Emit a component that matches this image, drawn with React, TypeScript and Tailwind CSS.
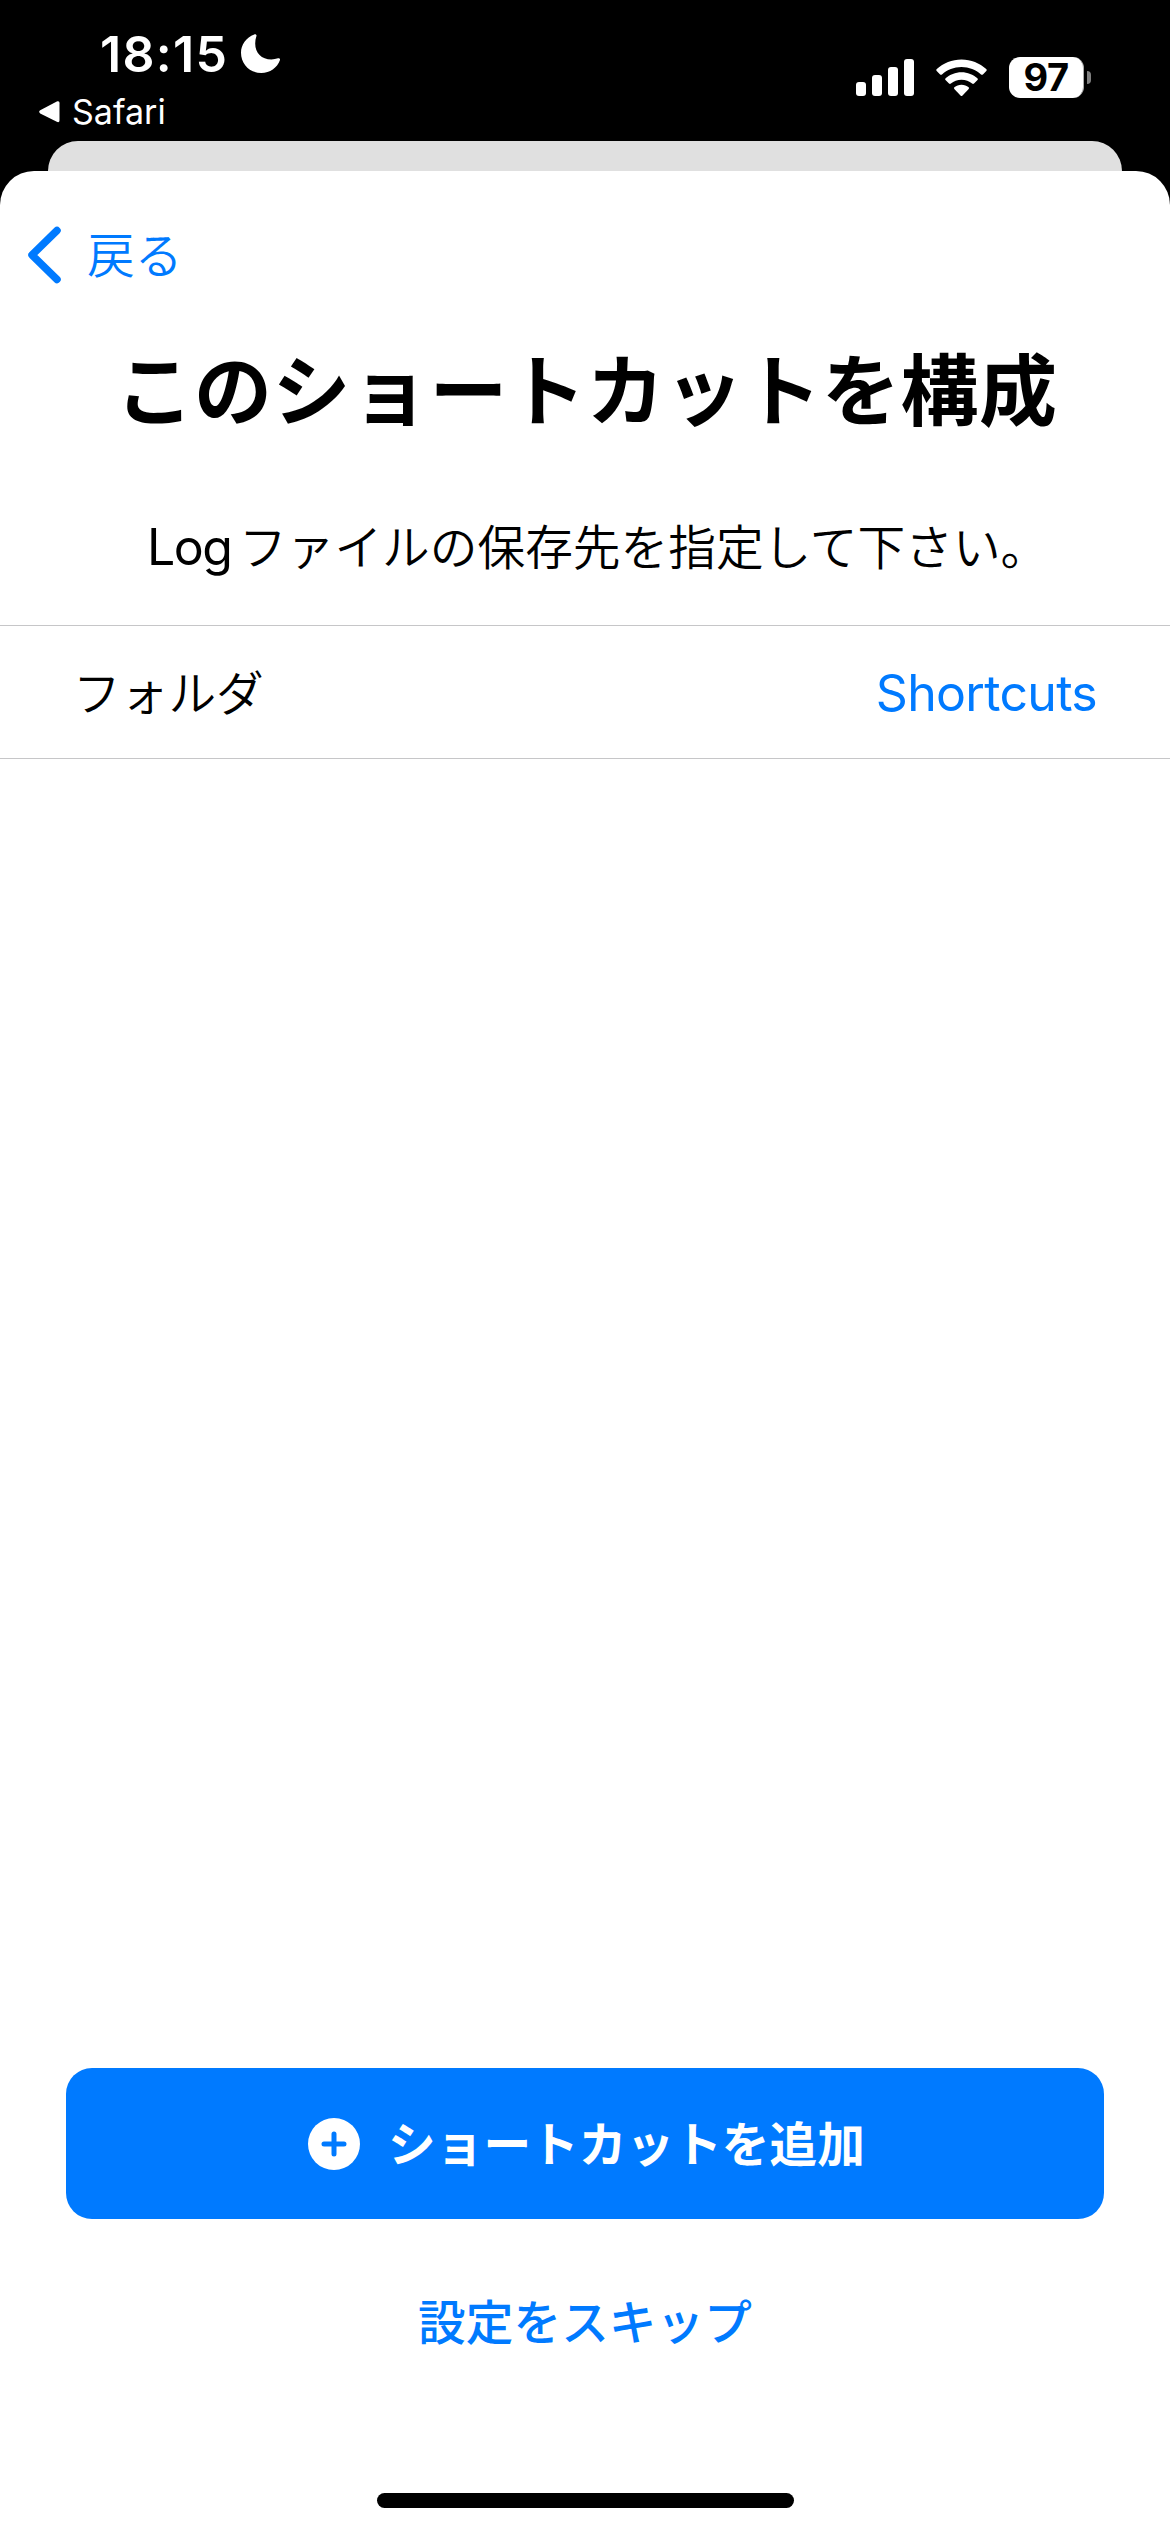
const latin = "font-['Inter','Noto_Sans_CJK_JP',sans-serif]";
const jp = "font-['Noto_Sans_CJK_JP',sans-serif]";

function StatusBar() {
  return (
    <header className="flex h-[141px] justify-between text-white">
      <div className="flex flex-col pl-[39px]">
        <div className="mt-[24px] ml-[61px] flex h-[60px] items-center">
          <span className="w-[141px] text-[50px] leading-[60px] font-semibold tracking-[1.300px]">18:15</span>
          <svg className="h-[40px] w-[40px]" viewBox="0 0 40 40" fill="currentColor">
            <path d="M13.2 .4C14.6 -.2 16 .8 15.4 2.3C14.6 4.6 14.2 7 14.2 9.4C14.2 19 20.6 25.4 30.4 25.4C32.8 25.4 35 25 37 24.3C38.4 23.8 39.4 24.9 38.9 26.3C36.1 33.9 29 39 20.3 39C8.800 39 0 30.200 0 18.800C0 10.400 5.200 3.400 13.200 .400Z" />
          </svg>
        </div>
        <div className="flex h-[56px] items-center">
          <svg className="h-[22px] w-[22px]" viewBox="0 0 22 22" fill="currentColor">
            <path d="M1.200 9.300L17.800 .600C19.500 -.200 20.500 .500 20.500 2.200V19.200C20.500 20.900 19.500 21.600 17.800 20.800L1.200 12.400C-.200 11.600 -.200 10.100 1.200 9.300Z" />
          </svg>
          <span className="ml-[11px] text-[34px] leading-[56px]">Safari</span>
        </div>
      </div>
      <div className="mt-[57px] mr-[79px] flex h-[41px] items-center">
        <div className="flex h-[37px] items-end gap-[6px]">
          <span className="h-[14px] w-[10px] rounded-[3px] bg-white" />
          <span className="h-[21px] w-[10px] rounded-[3px] bg-white" />
          <span className="h-[29px] w-[10px] rounded-[3px] bg-white" />
          <span className="h-[37px] w-[10px] rounded-[3px] bg-white" />
        </div>
        <svg className="ml-[22px] h-[38px] w-[51px]" viewBox="0 0 51 38" fill="currentColor">
          <path d="M25.500 .500C35 .500 43.700 4.100 50.200 10.100Q51.200 11 50.300 11.900L46.900 15.400Q46 16.300 45 15.400C39.900 10.700 33 7.900 25.500 7.900S11.100 10.700 6 15.400Q5 16.300 4.100 15.400L.700 11.900Q-.200 11 .800 10.100C7.300 4.100 16 .500 25.500 .500Z" />
          <path d="M25.500 13.200C31.600 13.200 37.200 15.500 41.400 19.300Q42.400 20.200 41.500 21.100L38 24.500Q37.100 25.400 36.100 24.600C33.300 22.200 29.600 20.700 25.500 20.700S17.700 22.200 14.900 24.600Q13.900 25.400 13 24.500L9.500 21.100Q8.600 20.200 9.600 19.300C13.800 15.500 19.400 13.200 25.500 13.200Z" />
          <path d="M25.500 25.800C28.300 25.800 30.700 26.800 32.600 28.300Q33.500 29.100 32.700 30L26.500 36.600Q25.500 37.600 24.500 36.600L18.300 30Q17.500 29.100 18.400 28.300C20.300 26.800 22.700 25.800 25.500 25.800Z" />
        </svg>
        <div className="ml-[22px] flex h-[41px] w-[75px] items-center justify-center rounded-[11px] border-r border-[#aaaaaa] bg-white text-[38px] leading-[41px] font-bold tracking-[-0.500px] text-black">
          97
        </div>
        <span className="ml-[3px] h-[13px] w-[4px] rounded-r-full bg-[#808080]" />
      </div>
    </header>
  );
}

export default function App() {
  return (
    <div lang="ja" className={`flex h-[2532px] w-[1170px] flex-col overflow-hidden bg-black ${latin}`}>
      <StatusBar />
      <div className="mx-[48px] h-[30px] shrink-0 rounded-t-[30px] bg-[#e0e0e0]" />
      <main className="flex grow flex-col rounded-t-[34px] bg-white">
        <button className="mt-[48px] ml-[27px] flex h-[72px] items-center self-start text-[#007aff]">
          <svg className="h-[58px] w-[35px]" viewBox="0 0 35 58" fill="none" stroke="currentColor" strokeWidth="7.500" strokeLinecap="round" strokeLinejoin="round">
            <path d="M30 4.500L5 29L30 53.500" />
          </svg>
          <span className={`mb-[5px] ml-[25px] text-[47.700px] leading-[67px] font-[350] ${jp}`}>戻る</span>
        </button>
        <h1 className={`mt-[37px] pl-[3px] text-center text-[78px] leading-[116px] font-bold tracking-[0.500px] text-black ${jp}`}>
          このショートカットを構成
        </h1>
        <p className="mt-[67px] flex h-[72px] items-center pl-[147px] text-black">
          <span className="w-[92px] text-[50px] leading-[72px] tracking-[-1.500px]">Log</span>
          <span className={`mb-[5px] text-[47.700px] leading-[67px] font-[350] ${jp}`}>ファイルの保存先を指定して下さい。</span>
        </p>
        <div className="mt-[42px] flex h-[134px] items-center justify-between border-y border-[#c6c6c8] pr-[73px] pl-[73px]">
          <span className={`mb-[2px] text-[47.700px] leading-[68px] font-[350] text-black ${jp}`}>フォルダ</span>
          <span className="mt-[2px] text-[50px] leading-[72px] tracking-[-0.700px] text-[#007aff]">Shortcuts</span>
        </div>
        <div className="grow" />
        <button className="mx-[66px] flex h-[151px] items-center justify-center rounded-[26px] bg-[#007aff] pl-[3px] text-white">
          <svg className="h-[52px] w-[52px]" viewBox="0 0 52 52">
            <circle cx="26" cy="26" r="26" fill="currentColor" />
            <path d="M26 16V36M16 26H36" stroke="#007aff" strokeWidth="5" strokeLinecap="round" />
          </svg>
          <span className={`mb-[4px] ml-[28px] text-[47.700px] leading-[66px] font-bold ${jp}`}>ショートカットを追加</span>
        </button>
        <button className={`mt-[65px] h-[72px] self-center text-[47.700px] leading-[72px] font-medium text-[#007aff] ${jp}`}>
          設定をスキップ
        </button>
        <div className="mt-[137px] mb-[24px] h-[15px] w-[417px] self-center rounded-full bg-black" />
      </main>
    </div>
  );
}
